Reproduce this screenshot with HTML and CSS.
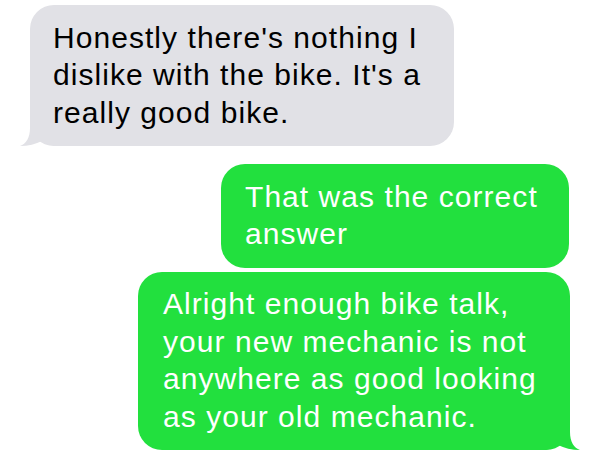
FILE: index.html
```html
<!DOCTYPE html>
<html>
<head>
<meta charset="utf-8">
<link rel="stylesheet" href="styles.css">
</head>
<body>
<div class="thread">
  <div class="bubble bubble--in bubble--w1">
    <svg class="tail tail--in" width="40" height="40" viewBox="0 0 40 40"><path d="M10 0 L10 22 C10 32 6 38 0 40 C8 40 16 38 22 35 C26 38 32 40 40 40 L40 0 Z"/></svg>
    <p class="text">Honestly there's nothing I<br>dislike with the bike. It's a<br>really good bike.</p>
  </div>
  <div class="bubble bubble--out bubble--w2">
    <p class="text">That was the correct<br>answer</p>
  </div>
  <div class="bubble bubble--out bubble--w3">
    <svg class="tail tail--out" width="40" height="40" viewBox="0 0 40 40"><path d="M10 0 L10 22 C10 32 6 38 0 40 C8 40 16 38 22 35 C26 38 32 40 40 40 L40 0 Z"/></svg>
    <p class="text">Alright enough bike talk,<br>your new mechanic is not<br>anywhere as good looking<br>as your old mechanic.</p>
  </div>
</div>
</body>
</html>
```
FILE: styles.css
```css
html, body {
  margin: 0;
  padding: 0;
  background: #ffffff;
}
.thread {
  display: flex;
  flex-direction: column;
  padding: 5px 30px 0 30px;
  font-family: "Liberation Sans", Arial, sans-serif;
}
.bubble {
  position: relative;
  box-sizing: border-box;
  border-radius: 24px;
  padding: 13.5px 24px 15px 24px;
}
.text {
  position: relative;
  margin: 0;
  font-size: 30px;
  line-height: 37.5px;
  letter-spacing: 1.05px;
  white-space: nowrap;
}
.bubble--in {
  align-self: flex-start;
  background: #e1e1e6;
  color: #000000;
  padding-left: 23px;
}
.bubble--out {
  align-self: flex-end;
  background: #22e03e;
  color: #ffffff;
}
.bubble--w1 { width: 424px; }
.bubble--w2 { width: 348px; margin-top: 18px; margin-right: 1px; }
.bubble--w3 { width: 432px; margin-top: 4px; padding-left: 25px; }
.tail {
  position: absolute;
  bottom: 0;
}
.tail--in {
  left: -10px;
  fill: #e1e1e6;
}
.tail--out {
  right: -10px;
  fill: #22e03e;
  transform: scaleX(-1);
}
```
